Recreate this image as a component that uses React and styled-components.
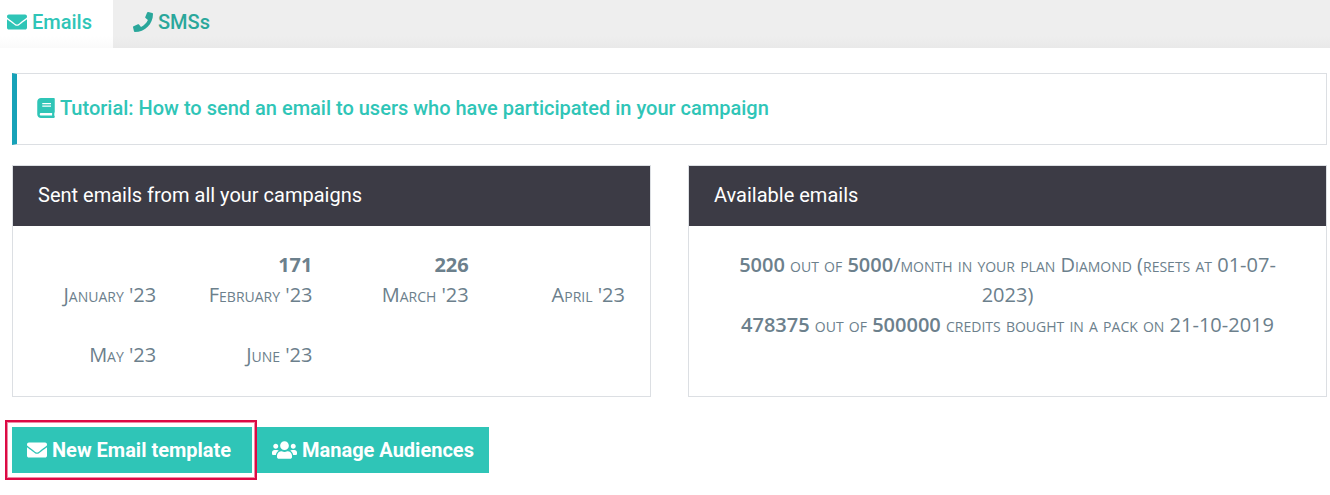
import styled, { createGlobalStyle } from 'styled-components';
import { FaBook, FaEnvelope, FaPhone, FaUsers } from 'react-icons/fa';

const GlobalStyle = createGlobalStyle`
    :root {
        --teal: #2fc5b7;
        --teal-dark: #2aa79b;
        --blue: #17a2b8;
        --dark: #3c3b45;
        --slate: #6c808c;
        --border: #dcdfe3;
        --red: #dc0a44;
        --pink: #ee8aa5;
    }

    body {
        margin: 0;
        background: #fff;
        color: var(--slate);
        font: 400 20px/30px Roboto, "Liberation Sans", sans-serif;
    }
`

const Tabs = styled.nav`
    display: flex;
    background: linear-gradient(#eee 75%, #e9e9e9);
`

const Tab = styled.a`
    display: flex;
    align-items: center;
    gap: 5px;
    padding: 7px 21px 11px ${(props) => (props.$active ? '7px' : '20px')};
    background: ${(props) => (props.$active ? 'linear-gradient(#fff 75%, #fafafa)' : 'transparent')};
    color: ${(props) => (props.$active ? 'var(--teal)' : 'var(--teal-dark)')};
    font-weight: 500;
    text-decoration: none;
`

const Content = styled.main`
    padding: 25px 3px 15px 12px;
`

const Tutorial = styled.div`
    border: 1px solid var(--border);
    border-left: 5px solid var(--blue);
    padding: 19px 20px 21px;
    margin-block-end: 20px;

    a {
        display: flex;
        align-items: center;
        gap: 5px;
        color: var(--teal);
        font-weight: 500;
        text-decoration: none;
    }
`

const BookIcon = styled(FaBook)`
    width: 18px;
    height: 20px;
    flex: none;
`

const UsersIcon = styled(FaUsers)`
    width: 25px;
    height: 20px;
    flex: none;
`

const Cards = styled.div`
    display: grid;
    grid-template-columns: 1fr 1fr;
    gap: 37px;
    margin-block-end: 30px;
`

const Card = styled.section`
    border: 1px solid var(--border);

    h2 {
        margin: 0;
        padding: 14px 25px 16px;
        background: var(--dark);
        color: #fff;
        font: inherit;
    }
`

const CardBody = styled.div`
    padding: 24px 25px 26px;
    font-family: "Open Sans", Roboto, sans-serif;
    font-variant: small-caps;

    strong {
        font-weight: 600;
    }

    p {
        margin: 0;
        text-align: center;
    }
`

const Months = styled.dl`
    display: grid;
    grid-template-columns: repeat(4, 1fr);
    column-gap: 38px;
    margin: 0;
    text-align: right;
    white-space: nowrap;
`

const Month = styled.div`
    display: flex;
    flex-direction: column-reverse;

    dd {
        margin: 0;
        min-height: 30px;
        font-weight: 700;
    }
`

const Actions = styled.div`
    display: flex;
    gap: 5px;
`

const Button = styled.button`
    display: flex;
    align-items: center;
    gap: 5px;
    min-width: ${(props) => props.$minWidth || 'auto'};
    padding: 8px 15px;
    border: 0;
    background: var(--teal);
    color: #fff;
    font: inherit;
    font-weight: 700;
    cursor: pointer;
`

/* red frame that stands around a button and over its neighbour */
const Highlight = styled.div`
    position: relative;

    &::after {
        content: "";
        position: absolute;
        inset: -7px -5px -7px -7px;
        border: 2px solid var(--red);
        box-shadow: inset 0 0 0 1px var(--pink);
        pointer-events: none;
    }
`

const months = [
    { name: "January '23" },
    { name: "February '23", sent: 171 },
    { name: "March '23", sent: 226 },
    { name: "April '23" },
    { name: "May '23" },
    { name: "June '23" },
];

const App = () => {

    return (
        <>
            <GlobalStyle/>
            <Tabs>
                <Tab href="#emails" $active aria-current="page"><FaEnvelope/> Emails</Tab>
                <Tab href="#smss"><FaPhone/> SMSs</Tab>
            </Tabs>
            <Content>
                <Tutorial>
                    <a href="#tutorial">
                        <BookIcon/> Tutorial: How to send an email to users who have participated in your campaign
                    </a>
                </Tutorial>
                <Cards>
                    <Card>
                        <h2>Sent emails from all your campaigns</h2>
                        <CardBody>
                            <Months>
                                {months.map(({ name, sent }) => (
                                    <Month key={name}>
                                        <dt>{name}</dt>
                                        <dd>{sent}</dd>
                                    </Month>
                                ))}
                            </Months>
                        </CardBody>
                    </Card>
                    <Card>
                        <h2>Available emails</h2>
                        <CardBody>
                            <p><strong>5000</strong> out of <strong>5000</strong>/month in your plan Diamond (resets at 01-07-2023)</p>
                            <p><strong>478375</strong> out of <strong>500000</strong> credits bought in a pack on 21-10-2019</p>
                        </CardBody>
                    </Card>
                </Cards>
                <Actions>
                    <Highlight>
                        <Button type="button" $minWidth="240px"><FaEnvelope/> New Email template</Button>
                    </Highlight>
                    <Button type="button"><UsersIcon/> Manage Audiences</Button>
                </Actions>
            </Content>
        </>
    )
}

export default App
